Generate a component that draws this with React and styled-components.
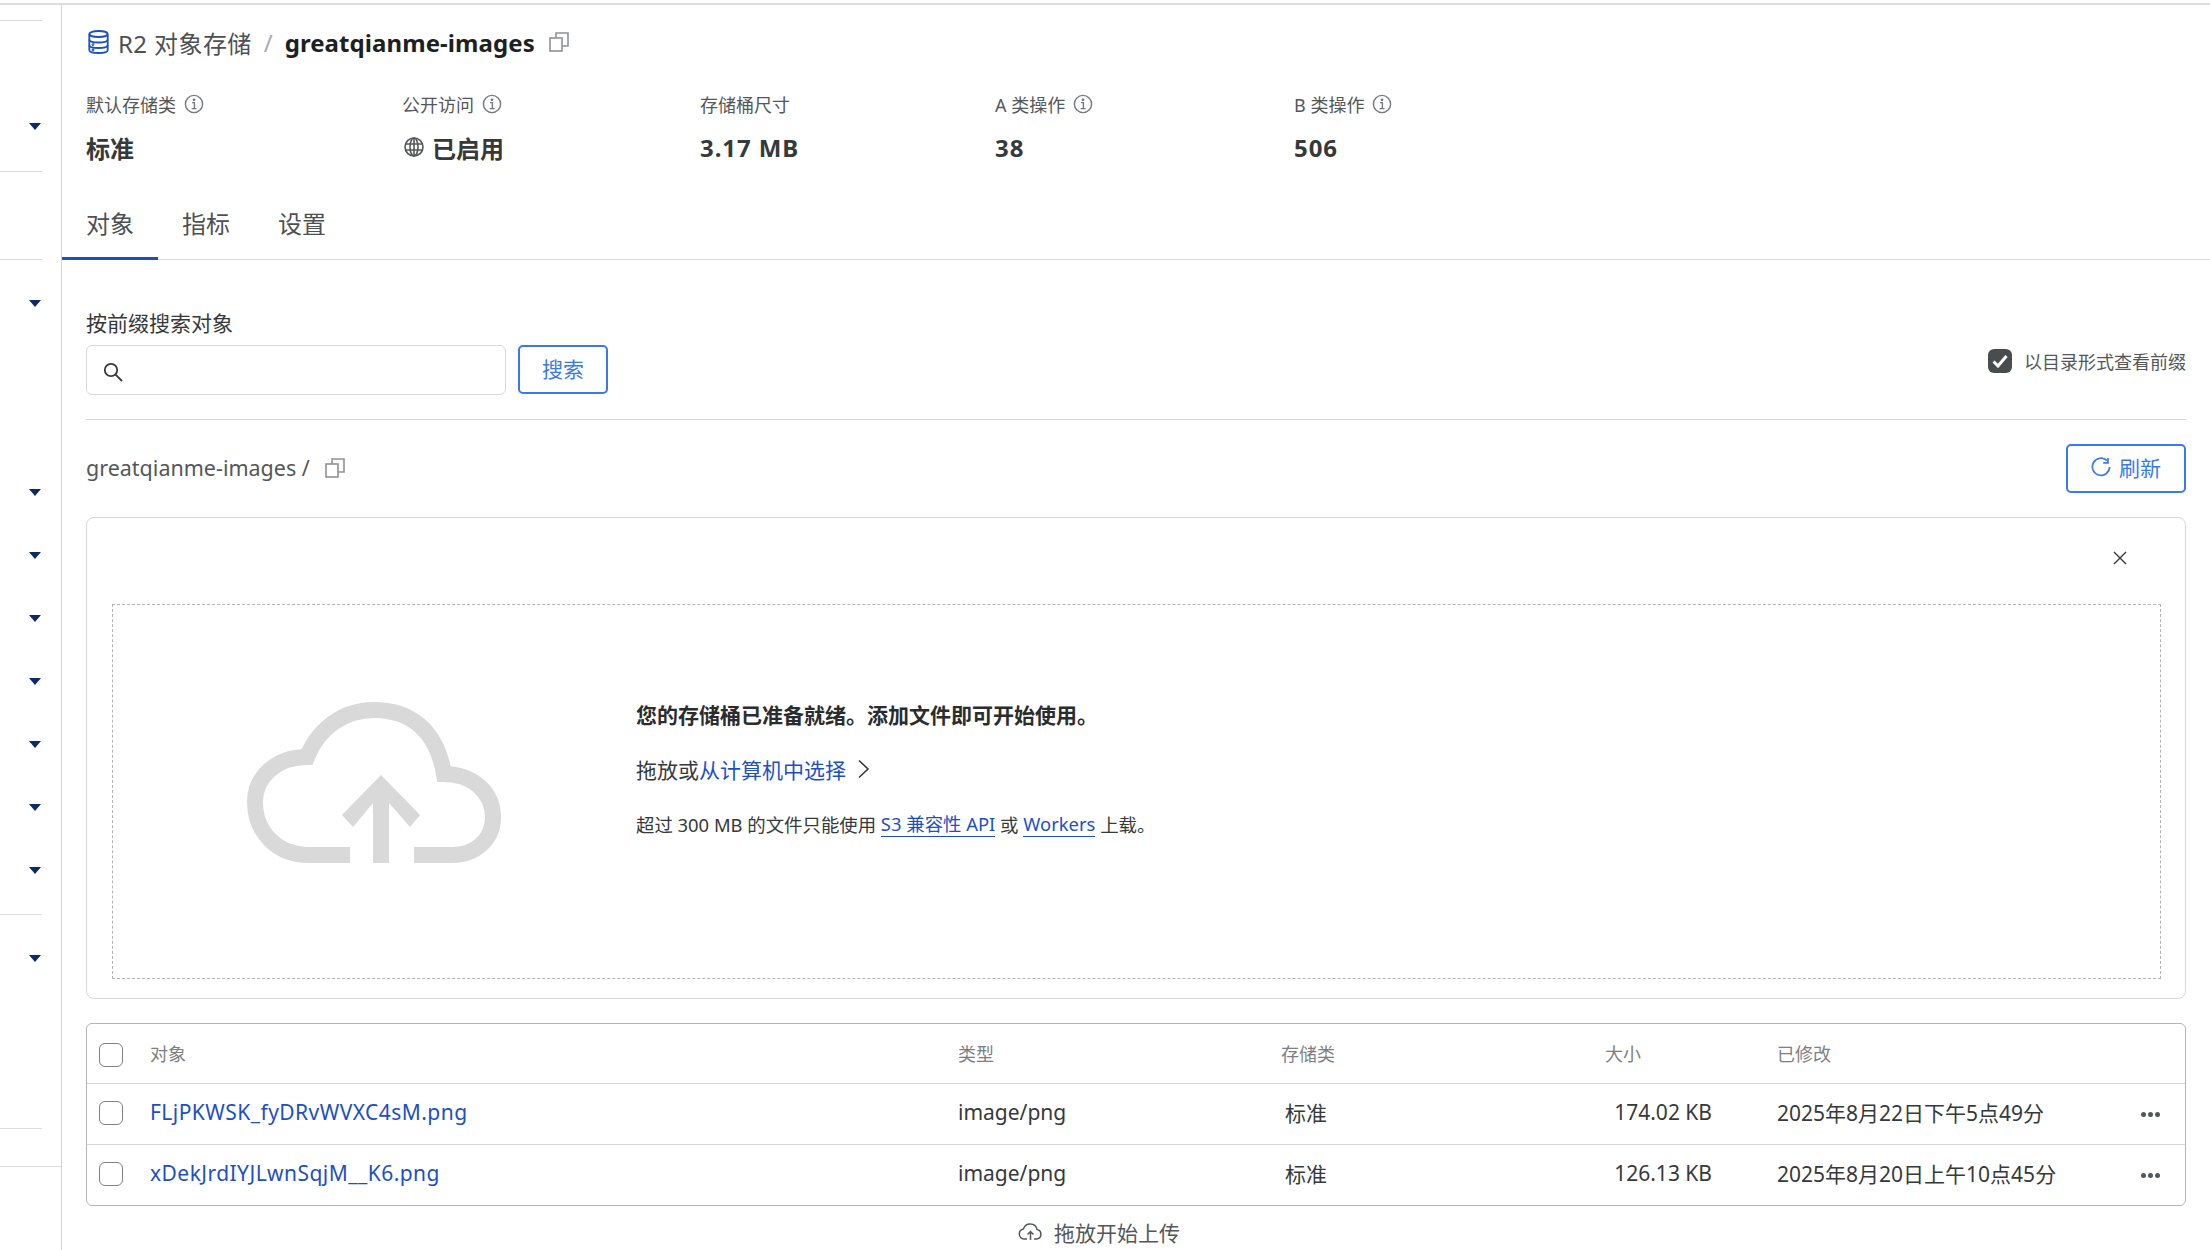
import React from "react";
import styled, { createGlobalStyle } from "styled-components";

const GlobalStyle = createGlobalStyle`
  * { box-sizing: border-box; }
  html, body { margin: 0; padding: 0; background: #fff; height: 1250px; overflow: hidden; }
  body {
    font-family: "Noto Sans", "Noto Sans CJK SC", sans-serif;
    color: #36393a;
  }
`;

const Page = styled.div`
  display: flex;
  height: 1247px;
  margin-top: 3px;
  border-top: 2px solid #dedede;
`;

const NavRail = styled.nav`
  width: 62px;
  flex: none;
  border-right: 1px solid #d4d4d4;
`;

const NavSection = styled.div`
  display: flow-root;
  height: ${p => p.$h}px;
  width: ${p => p.$full ? "61px" : "42px"};
  border-bottom: 1px solid #dedede;
`;

const NavRow = styled.div`
  height: 63px;
  margin-top: ${p => p.$gap || 0}px;
  display: flex;
  align-items: center;
  justify-content: flex-end;
  padding-right: 1px;
`;

const Caret = styled.span`
  width: 0;
  height: 0;
  border-left: 6.5px solid transparent;
  border-right: 6.5px solid transparent;
  border-top: 7px solid #0b2a66;
`;

const Main = styled.main`
  flex: 1;
  min-width: 0;
  padding: 0 24px;
`;

const TitleBar = styled.div`
  display: flex;
  align-items: center;
  height: 34px;
  margin: 20px 0 33px;
  font-size: 24px;
`;

const TitleIcon = styled.span`
  display: flex;
  margin-left: 2px;
`;

const Crumb = styled.span`
  margin-left: 9px;
  letter-spacing: 0.4px;
  color: #4d5053;
`;

const Slash = styled.span`
  margin: 0 12px;
  color: #a9abad;
`;

const BucketName = styled.strong`
  color: #1d1f20;
  font-weight: 700;
  letter-spacing: 0.08px;
`;

const CopyWrap = styled.span`
  display: inline-flex;
  margin-left: ${p => p.$gap}px;
  color: #8f9193;
`;

const Stats = styled.div`
  display: grid;
  grid-template-columns: 316px 298px 295px 299px 1fr;
`;

const StatLabel = styled.div`
  display: flex;
  align-items: center;
  gap: 8px;
  height: 24px;
  font-size: 18px;
  color: #54575a;
`;

const StatValue = styled.div`
  display: flex;
  align-items: center;
  gap: 8px;
  height: 36px;
  margin-top: 13px;
  font-size: 24px;
  font-weight: 700;
  letter-spacing: ${p => p.$latin ? "0.9px" : "0"};
  color: #36393a;
  svg { margin-left: 2px; }
`;

const Tabs = styled.div`
  display: flex;
  height: 70px;
  margin: 25px -24px 0;
  border-bottom: 1px solid #dedede;
`;

const Tab = styled.div`
  width: 96px;
  padding-top: 16px;
  height: 70px;
  text-align: center;
  font-size: 24px;
  line-height: 36px;
  color: #4d5053;
  border-bottom: 3px solid ${p => p.$active ? "#1d4fc4" : "transparent"};
`;

const SearchRow = styled.div`
  display: flex;
  justify-content: space-between;
  margin-top: 48px;
  padding-bottom: 24px;
  border-bottom: 1px solid #d8d8d8;
`;

const SearchLabel = styled.div`
  font-size: 21px;
  line-height: 30px;
  color: #36393a;
`;

const SearchControls = styled.div`
  display: flex;
  gap: 12px;
  margin-top: 7px;
`;

const SearchInput = styled.div`
  width: 420px;
  height: 50px;
  padding: 4px 0 0 15px;
  display: flex;
  align-items: center;
  border: 1px solid #d9d9d9;
  border-radius: 6px;
  color: #36393a;
`;

const OutlineButton = styled.button`
  display: flex;
  align-items: center;
  justify-content: center;
  gap: 8px;
  width: ${p => p.$w}px;
  height: 49px;
  padding: 0 0 4px;
  background: #fff;
  border: 2px solid #3a78f0;
  border-radius: 5px;
  font: inherit;
  font-size: 21px;
  color: #3a78f0;
`;

const PrefixToggle = styled.label`
  display: flex;
  align-items: center;
  gap: 12px;
  align-self: flex-end;
  margin-bottom: 21px;
  font-size: 18px;
  color: #54575a;
`;

const CheckedBox = styled.span`
  width: 24px;
  height: 24px;
  border-radius: 6px;
  background: #4a4d50;
  display: flex;
  align-items: center;
  justify-content: center;
`;

const PathRow = styled.div`
  display: flex;
  align-items: center;
  justify-content: space-between;
  height: 49px;
  margin-top: 24px;
`;

const PathText = styled.div`
  display: flex;
  align-items: center;
  padding-bottom: 2px;
  font-size: 21.5px;
  color: #54575a;
`;

const UploadCard = styled.section`
  position: relative;
  height: 482px;
  margin-top: 24px;
  padding: 86px 24px 19px 25px;
  border: 1px solid #d8d8d8;
  border-radius: 8px;
`;

const CloseButton = styled.span`
  position: absolute;
  top: 33px;
  right: 58px;
  display: flex;
  color: #36393a;
`;

const DropZone = styled.div`
  height: 375px;
  display: flex;
  align-items: center;
  gap: 134px;
  padding: 0 0 18px 134px;
  border: 1px dashed #b4b4b4;
`;

const DropCopy = styled.div`
  margin-bottom: 27px;
`;

const DropLine = styled.div`
  display: flex;
  align-items: center;
  height: 55px;
  font-size: ${p => p.$size}px;
  font-weight: ${p => p.$bold ? 700 : 400};
  color: ${p => p.$bold ? "#2a2c2e" : "#36393a"};
  white-space: pre;
`;

const BlueText = styled.span`
  color: #1d4fc4;
`;

const ChevronWrap = styled.span`
  display: flex;
  margin-left: 11px;
`;

const UnderLink = styled.a`
  color: #1d4fc4;
  border-bottom: 1px solid #1d4fc4;
  line-height: 24px;
`;

const ObjectTable = styled.div`
  margin-top: 24px;
  border: 1px solid #b4b4b4;
  border-radius: 6px;
`;

const TableRow = styled.div`
  display: grid;
  grid-template-columns: 63px 808px 323px 324px 172px 1fr 52px;
  align-items: center;
  height: ${p => p.$h}px;
  font-size: 21px;
  color: #36393a;
  border-bottom: ${p => p.$last ? "none" : "1px solid #d8d8d8"};
`;

const HeadCell = styled.div`
  margin-bottom: 2px;
  font-size: 18px;
  color: #7d7f82;
`;

const CheckCell = styled.div`
  padding-left: 12px;
  margin: ${p => p.$head ? "2px 0 0" : "0 0 2px"};
`;

const RowCheck = styled.span`
  display: block;
  width: 24px;
  height: 24px;
  border: 1px solid #7f8183;
  border-radius: 6px;
`;

const TextCell = styled.div`
  margin-bottom: 5px;
  padding-left: ${p => p.$indent || 0}px;
`;

const FileLink = styled.a`
  margin-bottom: 5px;
  color: #1d4fc4;
  letter-spacing: 0.45px;
`;

const SizeCell = styled.div`
  width: 107px;
  margin-bottom: 5px;
  text-align: right;
`;

const MoreDots = styled.div`
  display: flex;
  gap: 2px;
  margin: 0 0 -1px 8px;
  span {
    width: 5px;
    height: 5px;
    border-radius: 50%;
    background: #54575a;
  }
`;

const DropHint = styled.div`
  display: flex;
  align-items: center;
  justify-content: center;
  gap: 11px;
  margin-top: 11px;
  padding-right: 74px;
  font-size: 21px;
  color: #54575a;
`;

const CopyIcon = () => (
  <svg width="20" height="20" viewBox="0 0 20 20" fill="none" stroke="currentColor" strokeWidth="1.6">
    <rect x="1" y="6" width="12" height="13" />
    <path d="M7 6V1h12v13h-6" />
  </svg>
);

const InfoIcon = () => (
  <svg width="20" height="20" viewBox="0 0 20 20" fill="none" stroke="#77797c" strokeWidth="1.4">
    <circle cx="10" cy="10" r="8.6" />
    <path d="M8 8.6h2.4v6M7.6 14.6h5" />
    <circle cx="10" cy="5.8" r="0.7" fill="#77797c" />
  </svg>
);

const DatabaseIcon = () => (
  <svg width="21" height="24" viewBox="0 0 21 24" fill="none" stroke="#1d4fc4" strokeWidth="1.8">
    <ellipse cx="10.5" cy="4" rx="9.2" ry="3" />
    <path d="M1.3 4v16c0 1.8 4 3 9.2 3s9.2-1.2 9.2-3V4" />
    <path d="M1.3 9.5c0 1.8 4 3 9.2 3s9.2-1.2 9.2-3M1.3 15c0 1.8 4 3 9.2 3s9.2-1.2 9.2-3" />
    <circle cx="5" cy="14.6" r="0.5" />
    <circle cx="5" cy="20" r="0.5" />
  </svg>
);

const GlobeIcon = () => (
  <svg width="20" height="20" viewBox="0 0 20 20" fill="none" stroke="#54575a" strokeWidth="1.6">
    <circle cx="10" cy="10" r="9" />
    <ellipse cx="10" cy="10" rx="4" ry="9" />
    <path d="M10 1v18M1 7h18M1 13h18" />
  </svg>
);

const SearchIcon = () => (
  <svg width="22" height="22" viewBox="0 0 22 22" fill="none" stroke="currentColor" strokeWidth="1.8">
    <circle cx="9" cy="9" r="6.2" />
    <path d="M13.6 13.6 20 20" />
  </svg>
);

const CheckMark = () => (
  <svg width="16" height="14" viewBox="0 0 16 14" fill="none" stroke="#fff" strokeWidth="3">
    <path d="M1.5 7.5 6 12 14.5 2" />
  </svg>
);

const RefreshIcon = () => (
  <svg width="20" height="20" viewBox="0 0 20 20" fill="none" stroke="currentColor" strokeWidth="1.7">
    <path d="M16 3.6A8.6 8.6 0 1 0 18.6 10" />
    <path d="M17 1v4.8h-4.8" />
  </svg>
);

const CloseIcon = () => (
  <svg width="14" height="14" viewBox="0 0 14 14" fill="none" stroke="currentColor" strokeWidth="1.4">
    <path d="M1 1l12 12M13 1 1 13" />
  </svg>
);

const ChevronIcon = () => (
  <svg width="14" height="20" viewBox="0 0 14 20" fill="none" stroke="#36393a" strokeWidth="1.6">
    <path d="M2 1.5 11 10 2 18.5" />
  </svg>
);

const CloudUpload = () => (
  <svg width="255" height="162" viewBox="0 0 255 162" fill="none">
    <path
      d="M103 153H62C30 153 8 130 8 100C8 76 28 55 60 55C72 25 98 8 127 8C165 8 190 30 197 72C225 72 246 90 246 115C246 138 228 153 205 153H167"
      stroke="#d9d9d9"
      strokeWidth="16"
    />
    <polygon
      points="134,73 173,113 163,125 142,101 142,161 126,161 126,101 106,125 95,113"
      fill="#d9d9d9"
    />
  </svg>
);

const SmallCloud = () => (
  <svg width="25" height="18" viewBox="0 0 25 18" fill="none" stroke="#54575a" strokeWidth="1.5">
    <path d="M9 16H6a5 5 0 0 1-.6-9.9A7 7 0 0 1 19 6.4 4.9 4.9 0 0 1 19 16h-3" />
    <path d="M12.5 17V9M9.5 11.5l3-3 3 3" />
  </svg>
);

const navSections = [
  { h: 16, rows: [] },
  { h: 151, rows: [{ gap: 74 }] },
  { h: 88, rows: [] },
  { h: 655, rows: [{ gap: 12 }, { gap: 126 }, {}, {}, {}, {}, {}, {}] },
  { h: 214, rows: [{ gap: 12 }] },
  { h: 38, rows: [], full: true },
];

const stats = [
  { label: "默认存储类", info: true, value: "标准" },
  { label: "公开访问", info: true, value: "已启用", globe: true },
  { label: "存储桶尺寸", value: "3.17 MB", latin: true },
  { label: "A 类操作", info: true, value: "38", latin: true },
  { label: "B 类操作", info: true, value: "506", latin: true },
];

const files = [
  { name: "FLjPKWSK_fyDRvWVXC4sM.png", size: "174.02 KB", date: "2025年8月22日下午5点49分" },
  { name: "xDekJrdIYJLwnSqjM__K6.png", size: "126.13 KB", date: "2025年8月20日上午10点45分" },
];

export default function App() {
  return (
    <>
      <GlobalStyle />
      <Page>
        <NavRail>
          {navSections.map((section, i) => (
            <NavSection key={i} $h={section.h} $full={section.full}>
              {section.rows.map((row, j) => (
                <NavRow key={j} $gap={row.gap}>
                  <Caret />
                </NavRow>
              ))}
            </NavSection>
          ))}
        </NavRail>
        <Main>
          <TitleBar>
            <TitleIcon><DatabaseIcon /></TitleIcon>
            <Crumb>R2 对象存储</Crumb>
            <Slash>/</Slash>
            <BucketName>greatqianme-images</BucketName>
            <CopyWrap $gap={14}><CopyIcon /></CopyWrap>
          </TitleBar>

          <Stats>
            {stats.map(stat => (
              <div key={stat.label}>
                <StatLabel>
                  {stat.label}
                  {stat.info && <InfoIcon />}
                </StatLabel>
                <StatValue $latin={stat.latin}>
                  {stat.globe && <GlobeIcon />}
                  {stat.value}
                </StatValue>
              </div>
            ))}
          </Stats>

          <Tabs>
            <Tab $active>对象</Tab>
            <Tab>指标</Tab>
            <Tab>设置</Tab>
          </Tabs>

          <SearchRow>
            <div>
              <SearchLabel>按前缀搜索对象</SearchLabel>
              <SearchControls>
                <SearchInput><SearchIcon /></SearchInput>
                <OutlineButton $w={90}>搜索</OutlineButton>
              </SearchControls>
            </div>
            <PrefixToggle>
              <CheckedBox><CheckMark /></CheckedBox>
              以目录形式查看前缀
            </PrefixToggle>
          </SearchRow>

          <PathRow>
            <PathText>
              greatqianme-images /
              <CopyWrap $gap={15}><CopyIcon /></CopyWrap>
            </PathText>
            <OutlineButton $w={120}><RefreshIcon />刷新</OutlineButton>
          </PathRow>

          <UploadCard>
            <CloseButton><CloseIcon /></CloseButton>
            <DropZone>
              <CloudUpload />
              <DropCopy>
                <DropLine $size={21} $bold>您的存储桶已准备就绪。添加文件即可开始使用。</DropLine>
                <DropLine $size={21}>
                  拖放或<BlueText>从计算机中选择</BlueText>
                  <ChevronWrap><ChevronIcon /></ChevronWrap>
                </DropLine>
                <DropLine $size={18.4}>
                  超过 300 MB 的文件只能使用 <UnderLink>S3 兼容性 API</UnderLink> 或 <UnderLink>Workers</UnderLink> 上载。
                </DropLine>
              </DropCopy>
            </DropZone>
          </UploadCard>

          <ObjectTable>
            <TableRow $h={60}>
              <CheckCell $head><RowCheck /></CheckCell>
              <HeadCell>对象</HeadCell>
              <HeadCell>类型</HeadCell>
              <HeadCell>存储类</HeadCell>
              <HeadCell>大小</HeadCell>
              <HeadCell>已修改</HeadCell>
              <div />
            </TableRow>
            {files.map((file, i) => (
              <TableRow key={file.name} $h={i === 0 ? 61 : 60} $last={i === files.length - 1}>
                <CheckCell><RowCheck /></CheckCell>
                <FileLink>{file.name}</FileLink>
                <TextCell>image/png</TextCell>
                <TextCell $indent={4}>标准</TextCell>
                <SizeCell>{file.size}</SizeCell>
                <TextCell>{file.date}</TextCell>
                <MoreDots><span /><span /><span /></MoreDots>
              </TableRow>
            ))}
          </ObjectTable>

          <DropHint>
            <SmallCloud />
            拖放开始上传
          </DropHint>
        </Main>
      </Page>
    </>
  );
}
